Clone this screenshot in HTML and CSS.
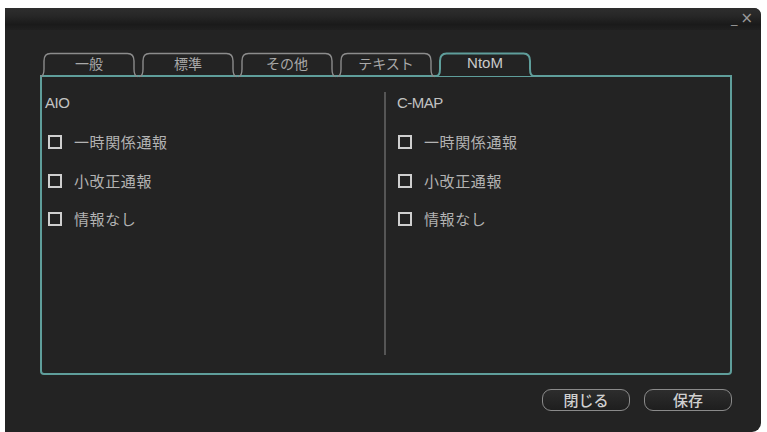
FILE: index.html
```html
<!DOCTYPE html>
<html lang="ja">
<head>
<meta charset="utf-8">
<link rel="stylesheet" href="styles.css">
</head>
<body>
<div class="win">
  <div class="titlebar">
    <span class="ctl min">_</span>
    <span class="ctl close">×</span>
  </div>
  <div class="content">
    <div class="tabs">
      <div class="tab"><svg class="tab-shape" viewBox="0 0 98 25" preserveAspectRatio="none"><path d="M0.5,24.5 Q4,24 4,17 L4,9 Q4,1.5 10.5,1.5 L87.5,1.5 Q94,1.5 94,9 L94,17 Q94,24 97.5,24.5"/></svg><span>一般</span></div>
      <div class="tab"><svg class="tab-shape" viewBox="0 0 98 25" preserveAspectRatio="none"><path d="M0.5,24.5 Q4,24 4,17 L4,9 Q4,1.5 10.5,1.5 L87.5,1.5 Q94,1.5 94,9 L94,17 Q94,24 97.5,24.5"/></svg><span>標準</span></div>
      <div class="tab"><svg class="tab-shape" viewBox="0 0 98 25" preserveAspectRatio="none"><path d="M0.5,24.5 Q4,24 4,17 L4,9 Q4,1.5 10.5,1.5 L87.5,1.5 Q94,1.5 94,9 L94,17 Q94,24 97.5,24.5"/></svg><span>その他</span></div>
      <div class="tab"><svg class="tab-shape" viewBox="0 0 98 25" preserveAspectRatio="none"><path d="M0.5,24.5 Q4,24 4,17 L4,9 Q4,1.5 10.5,1.5 L87.5,1.5 Q94,1.5 94,9 L94,17 Q94,24 97.5,24.5"/></svg><span>テキスト</span></div>
      <div class="tab active"><svg class="tab-shape" viewBox="0 0 98 25" preserveAspectRatio="none"><path d="M0,24 Q4,24 4,17 L4,9 Q4,1.5 10.5,1.5 L87.5,1.5 Q94,1.5 94,9 L94,17 Q94,24 98,24"/></svg><span>NtoM</span></div>
    </div>
    <div class="panel">
      <div class="col left">
        <div class="heading">AIO</div>
        <div class="opts">
          <label class="opt"><span class="box"></span><span class="txt">一時関係通報</span></label>
          <label class="opt"><span class="box"></span><span class="txt">小改正通報</span></label>
          <label class="opt"><span class="box"></span><span class="txt">情報なし</span></label>
        </div>
      </div>
      <div class="divider"></div>
      <div class="col right">
        <div class="heading">C-MAP</div>
        <div class="opts">
          <label class="opt"><span class="box"></span><span class="txt">一時関係通報</span></label>
          <label class="opt"><span class="box"></span><span class="txt">小改正通報</span></label>
          <label class="opt"><span class="box"></span><span class="txt">情報なし</span></label>
        </div>
      </div>
    </div>
    <div class="actions">
      <button class="btn">閉じる</button>
      <button class="btn">保存</button>
    </div>
  </div>
</div>
</body>
</html>
```
FILE: styles.css
```css
html, body {
  margin: 0;
  padding: 0;
  background: #ffffff;
}
body {
  font-family: "Noto Sans CJK JP", "Noto Sans", sans-serif;
  width: 767px;
  height: 432px;
  overflow: hidden;
}
.win {
  margin: 8px 0 0 5px;
  width: 756px;
  height: 424px;
  background: #232323;
  border-radius: 0 7px 9px 0;
  display: flex;
  flex-direction: column;
  overflow: hidden;
}
.titlebar {
  height: 22px;
  flex: none;
  background: linear-gradient(#2e2e2e 0%, #272727 35%, #1a1a1a 75%, #202020 100%);
  display: flex;
  justify-content: flex-end;
  align-items: flex-start;
  gap: 3px;
  padding-right: 8px;
  color: #9a9a9a;
  font-family: "DejaVu Sans", sans-serif;
}
.ctl {
  font-size: 13px;
  line-height: 16px;
}
.ctl.min {
  margin-top: 3px;
}
.ctl.close {
  font-size: 15px;
  margin-top: 2px;
}
.content {
  flex: 1;
  padding: 22px 29px 0 35px;
  display: flex;
  flex-direction: column;
}
.tabs {
  height: 25px;
  display: flex;
  gap: 1px;
  position: relative;
  z-index: 2;
  margin-bottom: -2px;
}
.tab {
  width: 98px;
  height: 25px;
  position: relative;
  display: flex;
  justify-content: center;
  align-items: center;
  color: #a9a9a9;
  font-size: 14px;
  line-height: 16px;
  padding-bottom: 4px;
  box-sizing: border-box;
}
.tab span {
  position: relative;
}
.tab-shape {
  position: absolute;
  inset: 0;
  width: 100%;
  height: 100%;
  overflow: visible;
}
.tab-shape path {
  fill: none;
  stroke: #8c8c8c;
  stroke-width: 1.4;
}
.tab.active .tab-shape path {
  fill: #232323;
  stroke: #5f9e9b;
  stroke-width: 2;
}
.tab.active {
  color: #cacaca;
  font-family: "Liberation Sans", sans-serif;
  font-size: 15px;
  font-weight: normal;
}
.panel {
  height: 300px;
  box-sizing: border-box;
  border: 2px solid #5f9e9b;
  border-radius: 0 0 4px 4px;
  display: grid;
  grid-template-columns: 342px 2px 1fr;
  color: #bdbdbd;
}
.col.left {
  padding: 17px 0 0 3px;
}
.col.right {
  padding: 17px 0 0 11px;
}
.heading {
  font-family: "Liberation Sans", sans-serif;
  font-size: 15px;
  line-height: 17px;
  color: #c2c2c2;
  letter-spacing: -0.5px;
}
.opts {
  display: flex;
  flex-direction: column;
  gap: 18.5px;
  margin-top: 21px;
}
.opt {
  display: flex;
  align-items: center;
  height: 20px;
  padding-left: 3px;
}
.col.right .opt {
  padding-left: 1px;
}
.box {
  width: 10px;
  height: 10px;
  border: 2px solid #cfcfcf;
  flex: none;
}
.txt {
  margin-left: 12px;
  font-size: 15px;
  line-height: 20px;
  letter-spacing: 0.6px;
  color: #b3b3b3;
}
.divider {
  background: #555555;
  margin: 15px 0 18px 0;
}
.actions {
  display: flex;
  justify-content: flex-end;
  gap: 14px;
  margin-top: 14px;
}
.btn {
  width: 88px;
  height: 22px;
  border: 1.5px solid #8a8a8a;
  border-radius: 9px;
  background: linear-gradient(#2d2d2d, #1e1e1e);
  color: #d0d0d0;
  font-family: "Noto Sans CJK JP", sans-serif;
  font-size: 15px;
  font-weight: 500;
  line-height: 18px;
  padding: 0;
}
```
